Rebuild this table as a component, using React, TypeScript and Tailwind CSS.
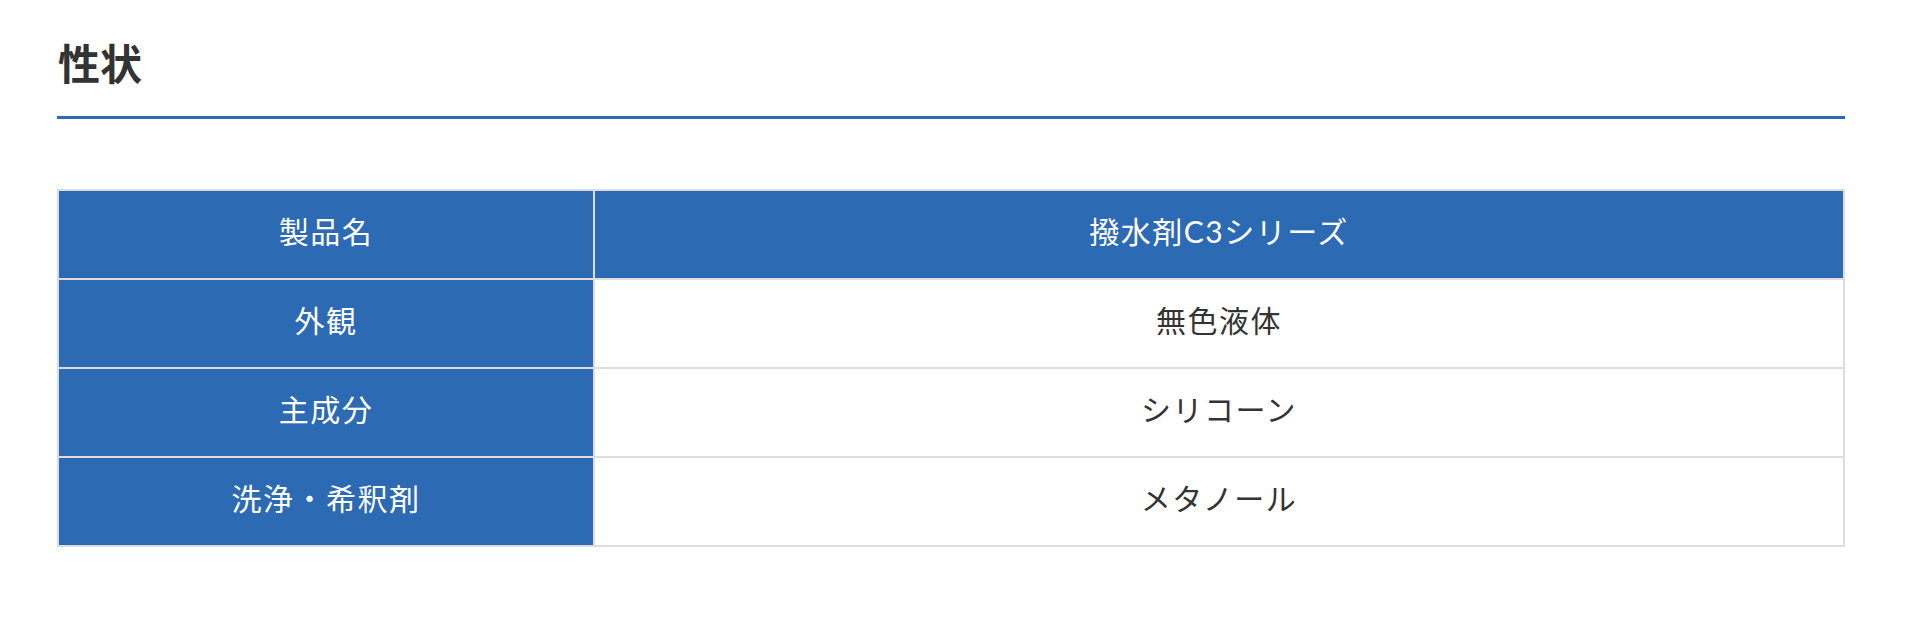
import React from "react";

const rows: [string, string][] = [
  ["製品名", "撥水剤C3シリーズ"],
  ["外観", "無色液体"],
  ["主成分", "シリコーン"],
  ["洗浄・希釈剤", "メタノール"],
];

export default function App() {
  return (
    <div
      className="w-[1920px] h-[624px] bg-white text-[#333]"
      style={{ fontFamily: "Lato, 'Noto Sans CJK JP', sans-serif" }}
    >
      <div className="ml-[57px] w-[1788px] pt-[34px]">
        <h2 className="text-[42px] leading-[60px] font-bold pb-[22px] border-b-[3px] border-[#2c6ab4] pl-[1px]">
          性状
        </h2>
        <table className="mt-[70px] w-full border-collapse border-2 border-[#dddddd]">
          <tbody>
            {rows.map(([k, v], i) => (
              <tr key={i} className="h-[89px]">
                <th className="w-[536px] bg-[#2c6ab4] text-white text-[30px] tracking-[0.05em] font-normal border-2 border-[#dddddd] text-center align-middle pb-[6px]">
                  {k}
                </th>
                <td
                  className={
                    "text-[30px] tracking-[0.05em] border-2 border-[#dddddd] text-center align-middle pb-[6px] " +
                    (i === 0 ? "bg-[#2c6ab4] text-white" : "bg-white text-[#333]")
                  }
                >
                  {v}
                </td>
              </tr>
            ))}
          </tbody>
        </table>
      </div>
    </div>
  );
}
